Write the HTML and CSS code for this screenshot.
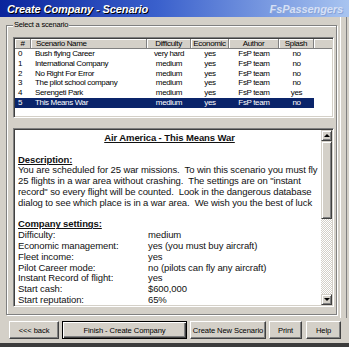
FILE: index.html
```html
<!DOCTYPE html>
<html>

<head>
    <title>Create Company - Scenario</title>
    <link rel="stylesheet" href="styles.css">
</head>

<body>
    <div id="window">
        <div id="titlebar">
            <span class="title">Create Company - Scenario</span>
            <span class="brand">FsPassengers</span>
        </div>
        <div id="frame">
            <div id="panel">
                <fieldset class="group">
                    <legend>Select a scenario</legend>
                    <div class="list">
                        <table>
                            <colgroup>
                                <col class="c-num">
                                <col class="c-name">
                                <col class="c-diff">
                                <col class="c-eco">
                                <col class="c-author">
                                <col class="c-splash">
                                <col>
                            </colgroup>
                            <thead>
                                <tr>
                                    <th>#</th>
                                    <th class="left">Scenario Name</th>
                                    <th>Difficulty</th>
                                    <th>Economic</th>
                                    <th>Author</th>
                                    <th>Splash</th>
                                    <th class="fill"></th>
                                </tr>
                            </thead>
                            <tbody>
                                <tr>
                                    <td class="num">0</td>
                                    <td class="name">Bush flying Career</td>
                                    <td>very hard</td>
                                    <td>yes</td>
                                    <td>FsP team</td>
                                    <td>no</td>
                                    <td class="fill"></td>
                                </tr>
                                <tr>
                                    <td class="num">1</td>
                                    <td class="name">International Company</td>
                                    <td>medium</td>
                                    <td>yes</td>
                                    <td>FsP team</td>
                                    <td>no</td>
                                    <td class="fill"></td>
                                </tr>
                                <tr>
                                    <td class="num">2</td>
                                    <td class="name">No Right For Error</td>
                                    <td>medium</td>
                                    <td>yes</td>
                                    <td>FsP team</td>
                                    <td>no</td>
                                    <td class="fill"></td>
                                </tr>
                                <tr>
                                    <td class="num">3</td>
                                    <td class="name">The pilot school company</td>
                                    <td>medium</td>
                                    <td>yes</td>
                                    <td>FsP team</td>
                                    <td>no</td>
                                    <td class="fill"></td>
                                </tr>
                                <tr>
                                    <td class="num">4</td>
                                    <td class="name">Serengeti Park</td>
                                    <td>medium</td>
                                    <td>yes</td>
                                    <td>FsP team</td>
                                    <td>yes</td>
                                    <td class="fill"></td>
                                </tr>
                                <tr class="selected">
                                    <td class="num">5</td>
                                    <td class="name">This Means War</td>
                                    <td>medium</td>
                                    <td>yes</td>
                                    <td>FsP team</td>
                                    <td>no</td>
                                    <td class="fill"></td>
                                </tr>
                            </tbody>
                        </table>
                    </div>

                    <div class="info">
                        <div class="info-text">
                            <div class="heading">Air America - This Means War</div>
                            <div class="line">&nbsp;</div>
                            <div class="line sub">Description:</div>
                            <div class="line">You are scheduled for 25 war missions.  To win this scenario you must fly</div>
                            <div class="line">25 flights in a war area without crashing.  The settings are on "instant</div>
                            <div class="line">record" so every flight will be counted.  Look in the dangerous database</div>
                            <div class="line">dialog to see which place is in a war area.  We wish you the best of luck</div>
                            <div class="line">&nbsp;</div>
                            <div class="line sub">Company settings:</div>
                            <div class="settings">
                                <span>Difficulty:</span><span>medium</span>
                                <span>Economic management:</span><span>yes (you must buy aircraft)</span>
                                <span>Fleet income:</span><span>yes</span>
                                <span>Pilot Career mode:</span><span>no (pilots can fly any aircraft)</span>
                                <span>Instant Record of flight:</span><span>yes</span>
                                <span>Start cash:</span><span>$600,000</span>
                                <span>Start reputation:</span><span>65%</span>
                            </div>
                        </div>
                        <div class="scrollbar">
                            <div class="arrow"><span class="tri up"></span></div>
                            <div class="thumb"></div>
                            <div class="track"></div>
                            <div class="arrow"><span class="tri down"></span></div>
                        </div>
                    </div>
                </fieldset>
            </div>
            <div class="edge"></div>
        </div>
        <div id="buttons">
            <button class="w-back">&lt;&lt;&lt; back</button>
            <button class="w-finish default">Finish - Create Company</button>
            <button class="w-new">Create New Scenario</button>
            <button class="w-print">Print</button>
            <button class="w-help">Help</button>
        </div>
    </div>
</body>

</html>
```

FILE: styles.css
```css
body {
    margin: 0;
}

#window {
    width: 349px;
    height: 347px;
    box-sizing: border-box;
    background-color: #d4d0c8;
    border-bottom: 4px solid #3c3c3c;
    font-family: "Liberation Sans", Arial, sans-serif;
    color: #000;
    overflow: hidden;
}

#titlebar {
    height: 17px;
    box-sizing: border-box;
    padding: 0 6px 0 7px;
    display: flex;
    justify-content: space-between;
    align-items: center;
    background: linear-gradient(to right, #0a249c, #3a60cc 45%, #a8c4f0);
    font-size: 11px;
    font-weight: bold;
    font-style: italic;
    letter-spacing: -0.1px;
}

.title {
    color: #fff;
    text-shadow: 1px 1px 0 #000;
}

.brand {
    color: #d6e0f6;
    text-shadow: 1px 1px 0 #8aa4d8;
}

#frame {
    display: flex;
    height: 301px;
}

#panel {
    width: 340px;
}

.edge {
    flex: 1;
    margin-right: 2px;
    border-left: 1px solid #fff;
    border-right: 1px solid #808080;
}

.group {
    width: 331px;
    height: 295px;
    box-sizing: border-box;
    margin: 3px 0 0 6px;
    padding: 7px 2px 6px 6px;
    min-width: 0;
    border: 1px solid #808080;
    box-shadow: inset 1px 1px #fff, 1px 1px #fff;
}

.group legend {
    padding: 0 1px;
    font-size: 7.5px;
    line-height: 10px;
    letter-spacing: -0.2px;
    background-color: #d4d0c8;
}

/* sunken boxes */
.list,
.info {
    box-sizing: border-box;
    border: 1px solid;
    border-color: #808080 #fff #fff #808080;
    box-shadow: inset 1px 1px #404040, inset -1px -1px #d4d0c8;
    background-color: #fff;
    padding: 1px;
}

.list {
    height: 81px;
}

.list table {
    width: 100%;
    table-layout: fixed;
    border-collapse: separate;
    border-spacing: 0;
    font-size: 8px;
    letter-spacing: -0.35px;
}

.c-num { width: 16px; }
.c-name { width: 116px; }
.c-diff { width: 44px; }
.c-eco { width: 38px; }
.c-author { width: 50px; }
.c-splash { width: 35px; }

.list th {
    height: 10px;
    box-sizing: border-box;
    padding: 0;
    font-weight: normal;
    line-height: 9px;
    background-color: #d4d0c8;
    border-right: 1px solid #808080;
    border-bottom: 1px solid #808080;
    box-shadow: inset 1px 1px #fff;
    white-space: nowrap;
    overflow: hidden;
}

.list th.left {
    text-align: left;
    padding-left: 5px;
}

.list th.fill {
    border-right: none;
}

.list td {
    height: 9.75px;
    padding: 0;
    line-height: 9.75px;
    text-align: center;
    white-space: nowrap;
    overflow: hidden;
}

.list td.num {
    text-align: left;
    padding-left: 3px;
}

.list td.name {
    text-align: left;
    padding-left: 4px;
}

.list tr.selected td {
    background-color: #0a246a;
    color: #fff;
}

.list tr.selected td.fill {
    background-color: transparent;
}

.info {
    margin-top: 10px;
    height: 179px;
    display: flex;
}

.info-text {
    flex: 1;
    padding: 3px 0 0 3px;
    font-size: 9.5px;
    line-height: 10.8px;
    letter-spacing: -0.1px;
    color: #111;
    overflow: hidden;
}

.info-text .line {
    white-space: pre;
}

.heading {
    text-align: center;
    font-weight: bold;
    text-decoration: underline;
}

.sub {
    font-weight: bold;
    text-decoration: underline;
}

.settings {
    display: grid;
    grid-template-columns: 130px auto;
    white-space: nowrap;
}

.scrollbar {
    width: 11px;
    display: flex;
    flex-direction: column;
}

.arrow,
.thumb {
    box-sizing: border-box;
    border: 1px solid;
    border-color: #d4d0c8 #404040 #404040 #d4d0c8;
    box-shadow: inset 1px 1px #fff, inset -1px -1px #808080;
    background-color: #d4d0c8;
}

.arrow {
    height: 11px;
    display: flex;
    align-items: center;
    justify-content: center;
}

.thumb {
    height: 78px;
}

.track {
    flex: 1;
    background: repeating-conic-gradient(#d4d0c8 0 25%, #fff 0 50%) 0 0 / 2px 2px;
}

.tri {
    width: 0;
    height: 0;
    border-left: 3px solid transparent;
    border-right: 3px solid transparent;
}

.tri.up {
    border-bottom: 3px solid #000;
}

.tri.down {
    border-top: 3px solid #000;
}

#buttons {
    display: flex;
    gap: 3px;
    padding: 3px 0 0 9px;
}

button {
    height: 18px;
    box-sizing: border-box;
    padding: 0;
    font-family: "Liberation Sans", Arial, sans-serif;
    font-size: 7.6px;
    letter-spacing: -0.1px;
    white-space: nowrap;
    color: #000;
    background-color: #d4d0c8;
    border: 1px solid;
    border-color: #fff #404040 #404040 #fff;
    box-shadow: inset -1px -1px #808080, inset 1px 1px #d4d0c8;
}

button.default {
    border-color: #000;
    box-shadow: inset 1px 1px #fff, inset -1px -1px #404040, inset -2px -2px #808080;
}

.w-back { width: 50px; }
.w-finish { width: 125px; }
.w-new { width: 76px; }
.w-print { width: 33px; }
.w-help { width: 35px; margin-left: 1px; }
```
